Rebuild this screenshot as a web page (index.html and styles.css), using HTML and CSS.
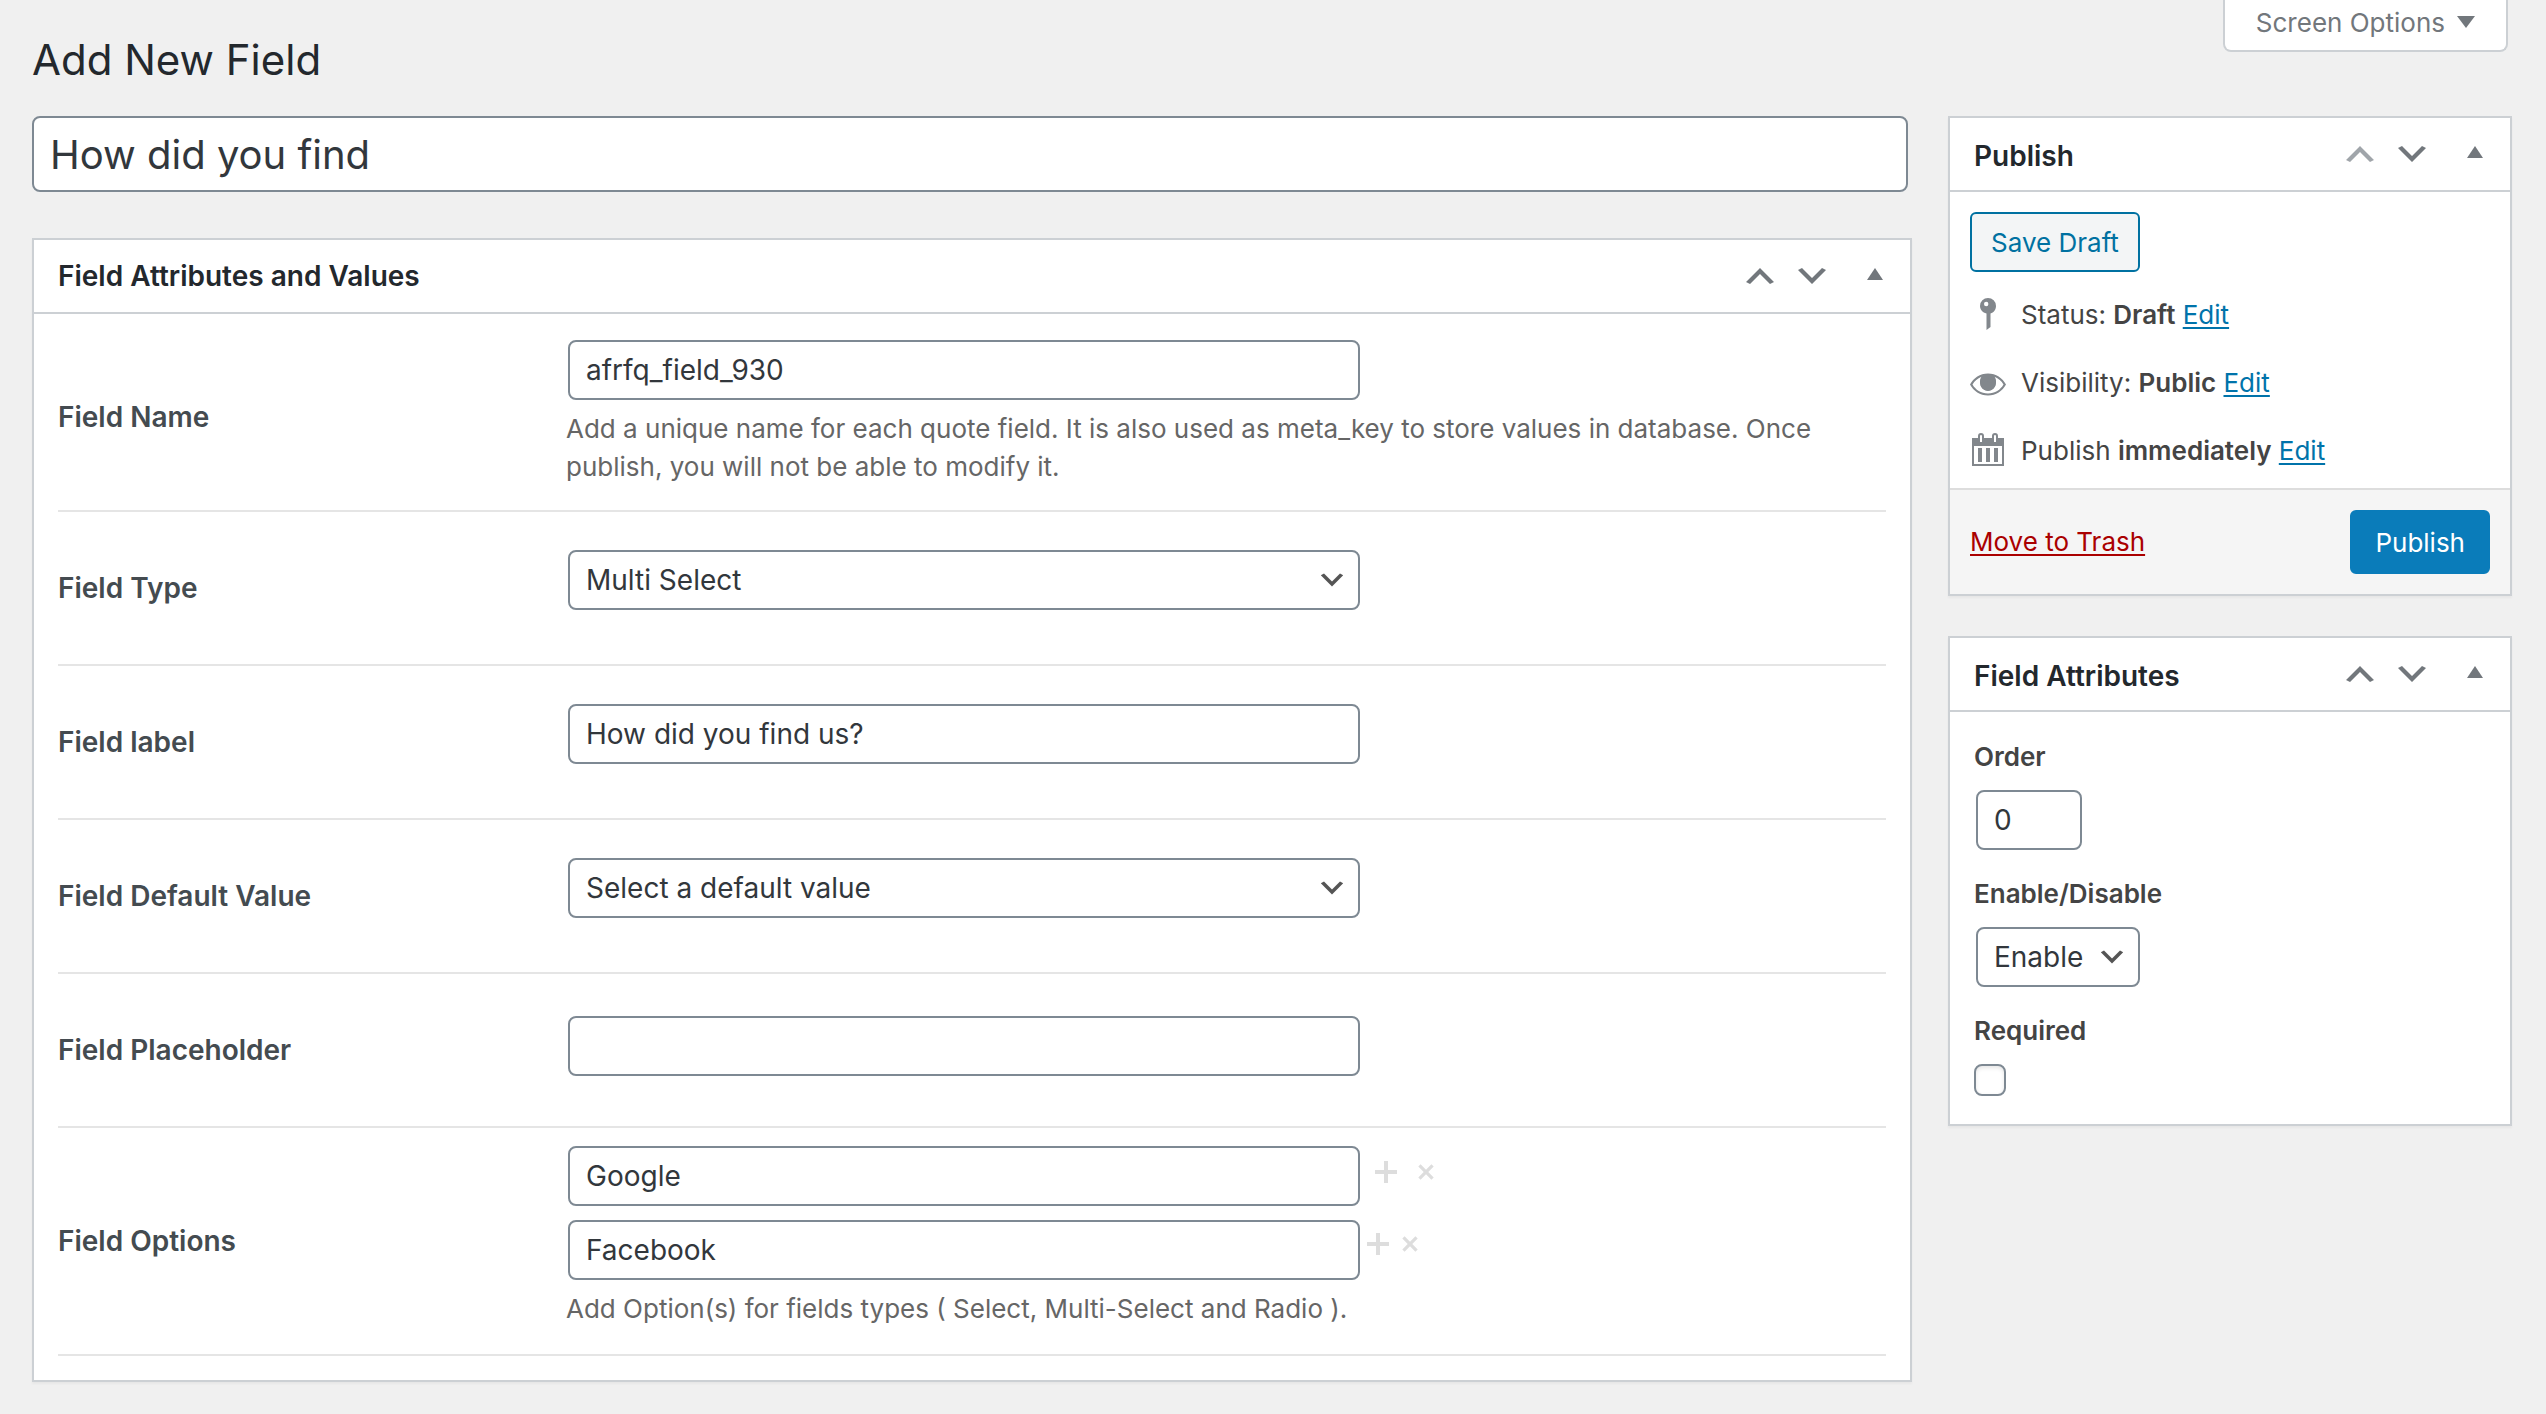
FILE: index.html
```html
<!DOCTYPE html>
<html lang="en">
<head>
  <meta charset="UTF-8" />
  <meta name="viewport" content="width=device-width, initial-scale=1.0" />
  <title>Add New Field</title>
  <link rel="stylesheet" href="styles.css">
</head>
<body>
  <!-- Shared icons -->
  <svg class="icon-defs" aria-hidden="true">
    <symbol id="icon-up" viewBox="0 0 20 20"><path d="M15 14l-5-5-5 5-2-1 7-7 7 7z"/></symbol>
    <symbol id="icon-down" viewBox="0 0 20 20"><path d="M5 6l5 5 5-5 2 1-7 7-7-7z"/></symbol>
    <symbol id="icon-toggle" viewBox="0 0 16 12"><path d="M8 0l8 12H0z"/></symbol>
    <symbol id="icon-plus" viewBox="0 0 24 24"><path d="M10 1h4v9h9v4h-9v9h-4v-9H1v-4h9z"/></symbol>
    <symbol id="icon-times" viewBox="0 0 16 24"><path d="M2.6 4.3L8 9.7l5.4-5.4 2.3 2.3-5.4 5.4 5.4 5.4-2.3 2.3L8 14.3l-5.4 5.4-2.3-2.3L5.7 12 .3 6.600z"/></symbol>
  </svg>

  <header class="page-header">
    <h1>Add New Field</h1>
    <button type="button" class="screen-options">Screen Options
      <svg width="18" height="12" viewBox="0 0 18 12"><path d="M0 0h18L9 12z"/></svg>
    </button>
  </header>

  <form class="layout">
    <main class="main-column">
      <input type="text" class="title-input" aria-label="Title" value="How did you find">

      <section class="postbox">
        <div class="postbox-header">
          <h2>Field Attributes and Values</h2>
          <button type="button" class="order-btn" aria-label="Move up"><svg><use href="#icon-up"/></svg></button>
          <button type="button" class="order-btn" aria-label="Move down"><svg><use href="#icon-down"/></svg></button>
          <button type="button" class="toggle-btn" aria-label="Toggle panel"><svg><use href="#icon-toggle"/></svg></button>
        </div>

        <div class="field-table">
          <div class="field-row row-described">
            <label for="field-name">Field Name</label>
            <div class="field-cell">
              <input type="text" id="field-name" class="control" value="afrfq_field_930">
              <p class="description">Add a unique name for each quote field. It is also used as meta_key to store values in database. Once publish, you will not be able to modify it.</p>
            </div>
          </div>

          <div class="field-row">
            <label for="field-type">Field Type</label>
            <div class="field-cell">
              <select id="field-type" class="control">
                <option>Multi Select</option>
              </select>
            </div>
          </div>

          <div class="field-row">
            <label for="field-label">Field label</label>
            <div class="field-cell">
              <input type="text" id="field-label" class="control" value="How did you find us?">
            </div>
          </div>

          <div class="field-row">
            <label for="field-default">Field Default Value</label>
            <div class="field-cell">
              <select id="field-default" class="control">
                <option>Select a default value</option>
              </select>
            </div>
          </div>

          <div class="field-row row-placeholder">
            <label for="field-placeholder">Field Placeholder</label>
            <div class="field-cell">
              <input type="text" id="field-placeholder" class="control">
            </div>
          </div>

          <div class="field-row row-options">
            <label for="field-option-1">Field Options</label>
            <div class="field-cell">
              <div class="option-line option-first">
                <input type="text" id="field-option-1" class="control" value="Google">
                <button type="button" class="option-btn" aria-label="Add option"><svg width="24" height="24"><use href="#icon-plus"/></svg></button>
                <button type="button" class="option-btn" aria-label="Remove option"><svg width="16" height="24"><use href="#icon-times"/></svg></button>
              </div>
              <div class="option-line">
                <input type="text" class="control" aria-label="Option 2" value="Facebook">
                <button type="button" class="option-btn" aria-label="Add option"><svg width="24" height="24"><use href="#icon-plus"/></svg></button>
                <button type="button" class="option-btn" aria-label="Remove option"><svg width="16" height="24"><use href="#icon-times"/></svg></button>
              </div>
              <p class="description">Add Option(s) for fields types ( Select, Multi-Select and Radio ).</p>
            </div>
          </div>
        </div>
      </section>
    </main>

    <aside class="side-column">
      <section class="postbox">
        <div class="postbox-header">
          <h2>Publish</h2>
          <button type="button" class="order-btn" aria-label="Move up" disabled><svg><use href="#icon-up"/></svg></button>
          <button type="button" class="order-btn" aria-label="Move down"><svg><use href="#icon-down"/></svg></button>
          <button type="button" class="toggle-btn" aria-label="Toggle panel"><svg><use href="#icon-toggle"/></svg></button>
        </div>

        <div class="publish-body">
          <button type="button" class="save-draft">Save Draft</button>
          <div class="publish-line">
            <svg class="status-icon" viewBox="0 0 40 40">
              <path fill-rule="evenodd" d="M20 4a8 8 0 0 1 8 8c0 3.700-2.200 6.500-5.500 7.600V33L18.500 36V19.600C14.700 18.500 12 15.700 12 12a8 8 0 0 1 8-8zM18.200 7.800a2.200 2.200 0 1 0 0 4.400 2.200 2.200 0 0 0 0-4.400z"/>
            </svg>
            <span>Status: <b>Draft</b> <a href="#">Edit</a></span>
          </div>
          <div class="publish-line">
            <svg class="status-icon" viewBox="0 0 40 40">
              <path fill-rule="evenodd" d="M20 11.500c8 0 14.500 4.500 18 11-3.500 6.500-10 11-18 11s-14.500-4.500-18-11c3.500-6.500 10-11 18-11zM13.500 14.700C9.500 16.300 6.500 19 4.500 22.500c3 5.200 8.500 9 15.500 9s12.500-3.800 15.500-9c-2-3.500-5-6.200-9-7.800 1 1.300 1.500 3 1.500 5 0 5-3.500 9-8 9s-8-4-8-9c0-2 .5-3.700 1.500-5z"/>
              <path fill-rule="evenodd" d="M20 12a8 8.500 0 0 1 0 17 8 8.500 0 0 1 0-17zM22.200 15a2.500 2.700 0 1 0 0 5.400 2.500 2.700 0 0 0 0-5.400z"/>
            </svg>
            <span>Visibility: <b>Public</b> <a href="#">Edit</a></span>
          </div>
          <div class="publish-line">
            <svg class="status-icon" viewBox="0 0 40 40">
              <path fill-rule="evenodd" d="M4 8h32v28H4zM6 16v18h28V16z"/>
              <path d="M10 18h4v14h-4zM18 18h4v14h-4zM26 18h4v14h-4z"/>
              <path d="M10 13V6a3 3 0 0 1 6 0v7zM24 13V6a3 3 0 0 1 6 0v7z"/>
              <path class="ring-hole" d="M12 12V6a1 1 0 0 1 2 0v6zM26 12V6a1 1 0 0 1 2 0v6z"/>
            </svg>
            <span>Publish <b>immediately</b> <a href="#">Edit</a></span>
          </div>
        </div>

        <div class="publish-footer">
          <a href="#" class="trash-link">Move to Trash</a>
          <button type="submit" class="publish-btn">Publish</button>
        </div>
      </section>

      <section class="postbox">
        <div class="postbox-header">
          <h2>Field Attributes</h2>
          <button type="button" class="order-btn" aria-label="Move up"><svg><use href="#icon-up"/></svg></button>
          <button type="button" class="order-btn" aria-label="Move down"><svg><use href="#icon-down"/></svg></button>
          <button type="button" class="toggle-btn" aria-label="Toggle panel"><svg><use href="#icon-toggle"/></svg></button>
        </div>

        <div class="attributes-body">
          <div class="attribute">
            <label for="order">Order</label>
            <input type="text" inputmode="numeric" id="order" class="control order-input" value="0">
          </div>
          <div class="attribute">
            <label for="enable">Enable/Disable</label>
            <select id="enable" class="control enable-select">
              <option>Enable</option>
            </select>
          </div>
          <div class="attribute">
            <label for="required">Required</label>
            <input type="checkbox" id="required" class="checkbox">
          </div>
        </div>
      </section>
    </aside>
  </form>
</body>
</html>
```

FILE: styles.css
```css
* {
  box-sizing: border-box;
}

body {
  margin: 0;
  padding: 0 34px 32px 32px;
  font-family: Inter, "Liberation Sans", sans-serif;
  font-size: 26px;
  line-height: 38px;
  color: #444;
  background-color: #f0f0f0;
}

h1,
h2,
p {
  margin: 0;
}

button,
input,
select {
  margin: 0;
  font-family: inherit;
}

button {
  cursor: pointer;
}

svg {
  display: block;
  fill: currentColor;
}

a {
  color: #0073aa;
  text-decoration-thickness: 2px;
  text-underline-offset: 3px;
  text-decoration-skip-ink: none;
}

b {
  font-weight: 600;
}

.icon-defs {
  position: absolute;
  width: 0;
  height: 0;
}

/* Header */
.page-header {
  display: flex;
  justify-content: space-between;
  align-items: flex-start;
  height: 116px;
}

h1 {
  padding-top: 30px;
  font-size: 42px;
  line-height: 60px;
  font-weight: 400;
  color: #23282d;
}

.screen-options {
  display: flex;
  align-items: center;
  gap: 12px;
  height: 52px;
  margin-right: 4px;
  padding: 0 31px 6px;
  border: 2px solid #ccd0d4;
  border-top: 0;
  border-radius: 0 0 8px 8px;
  background-color: #fff;
  color: #72777c;
  font-size: 26px;
}

/* Columns */
.layout {
  display: flex;
  align-items: flex-start;
  gap: 36px;
}

.main-column {
  flex: 1;
  min-width: 0;
}

.side-column {
  display: flex;
  flex-direction: column;
  gap: 40px;
  width: 564px;
}

.title-input {
  display: block;
  width: calc(100% - 4px);
  height: 76px;
  margin-bottom: 46px;
  padding: 0 16px;
  border: 2px solid #7e8993;
  border-radius: 8px;
  background-color: #fff;
  color: #32373c;
  font-size: 40px;
}

/* Boxes */
.postbox {
  border: 2px solid #ccd0d4;
  background-color: #fff;
  box-shadow: 0 2px 2px rgba(0,0,0,0.04);
}

.postbox-header {
  display: flex;
  align-items: center;
  height: 74px;
  border-bottom: 2px solid #ccd0d4;
}

.postbox-header h2 {
  flex: 1;
  padding-left: 24px;
  font-size: 28px;
  font-weight: 600;
  color: #23282d;
}

.side-column .postbox-header h2 {
  padding-top: 4px;
}

.order-btn,
.toggle-btn,
.option-btn {
  padding: 0;
  border: none;
  background: none;
  color: #72777c;
}

.order-btn {
  margin-right: 12px;
}

.order-btn svg {
  width: 40px;
  height: 40px;
}

.order-btn:disabled {
  color: #a0a5aa;
}

.toggle-btn {
  display: flex;
  justify-content: center;
  width: 66px;
  padding: 0 4px 4px 0;
}

.toggle-btn svg {
  width: 16px;
  height: 12px;
}

/* Form controls */
.control {
  display: block;
  height: 60px;
  margin-left: 2px;
  padding: 0 16px;
  border: 2px solid #7e8993;
  border-radius: 8px;
  background-color: #fff;
  color: #32373c;
  font-size: 28px;
}

select.control {
  appearance: none;
  padding-right: 48px;
  background-image: url("data:image/svg+xml,%3Csvg xmlns='http://www.w3.org/2000/svg' viewBox='0 0 20 20'%3E%3Cpath d='M5 6l5 5 5-5 2 1-7 7-7-7 2-1z' fill='%23555'/%3E%3C/svg%3E");
  background-repeat: no-repeat;
  background-position: right 10px center;
  background-size: 32px 32px;
}

/* Field rows */
.field-table {
  padding: 12px 24px 24px;
}

.field-row {
  display: grid;
  grid-template-columns: 508px 1fr;
  align-items: center;
  padding: 38px 0 54px;
  border-bottom: 2px solid #e5e5e5;
}

.field-row label {
  font-size: 28px;
  font-weight: 600;
  color: #444b50;
}

/* labels sit in the middle of the row, not of its content */
.field-row > label {
  margin-bottom: -16px;
}

.field-cell .control {
  width: 60%;
}

.row-described {
  padding: 14px 0 24px;
}

.row-described > label,
.row-placeholder > label,
.row-options > label {
  margin-bottom: -8px;
}

.row-placeholder {
  padding: 42px 0 50px;
}

.row-options {
  padding: 18px 0 26px;
}

.description {
  margin-top: 10px;
  padding-right: 16px;
  color: #666;
}

.option-line {
  display: flex;
  align-items: flex-start;
  gap: 12px;
}

.option-first {
  gap: 20px;
  margin-bottom: 14px;
}

.option-line .control {
  margin-right: -6px;
}

.option-btn {
  padding-top: 12px;
  color: #ddd;
}

.option-first .option-btn {
  padding-top: 14px;
}

/* Publish box */
.publish-body {
  padding: 20px 20px 4px;
}

.save-draft {
  display: block;
  height: 60px;
  margin-bottom: 8px;
  padding: 0 19px;
  border: 2px solid #0071a1;
  border-radius: 6px;
  background-color: #f3f5f6;
  color: #0071a1;
  font-size: 26px;
}

.publish-line {
  display: flex;
  align-items: center;
  gap: 13px;
  height: 68px;
}

.publish-line span {
  padding-top: 2px;
}

.status-icon {
  width: 40px;
  height: 40px;
  margin-left: -2px;
  color: #82878c;
}

.ring-hole {
  fill: #fff;
}

.publish-footer {
  display: flex;
  justify-content: space-between;
  align-items: center;
  padding: 20px;
  border-top: 2px solid #ddd;
  background-color: #f5f5f5;
}

.trash-link {
  color: #a00;
}

.publish-btn {
  height: 64px;
  padding: 0 23px;
  border: 2px solid #0a7cba;
  border-radius: 6px;
  background-color: #0a7cba;
  color: #fff;
  font-size: 26px;
}

/* Attributes box */
.attributes-body {
  display: flex;
  flex-direction: column;
  gap: 24px;
  padding: 25px 24px 28px;
}

.attribute label {
  display: block;
  margin-bottom: 13px;
  line-height: 40px;
  font-weight: 600;
}

.order-input {
  width: 106px;
}

.enable-select {
  width: 164px;
}

.checkbox {
  appearance: none;
  display: block;
  width: 32px;
  height: 32px;
  border: 2px solid #7e8993;
  border-radius: 8px;
  background-color: #fff;
  box-shadow: inset 0 2px 4px rgba(0,0,0,0.1);
}
```
